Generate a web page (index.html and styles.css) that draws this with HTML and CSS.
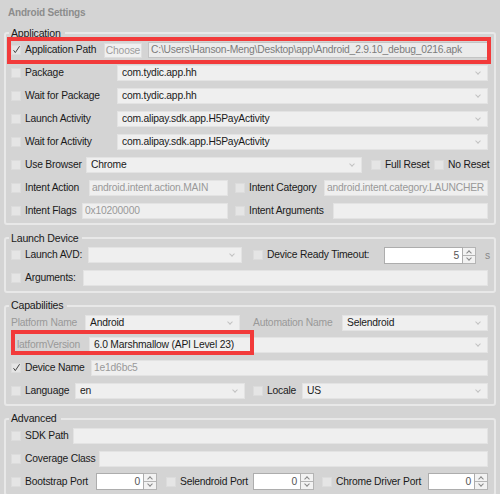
FILE: index.html
```html
<!DOCTYPE html>
<html lang="en">

<head>
    <meta charset="UTF-8">
    <title>Android Settings</title>
    <link rel="stylesheet" href="styles.css">
</head>

<body>
    <div class="page">
        <div class="title">Android Settings</div>

        <!-- Application -->
        <fieldset class="group">
            <legend>Application</legend>
            <div class="row">
                <span class="cb on"><svg viewBox="0 0 10 10"><path d="M2.5 5.2 L4.3 7.6 L8.6 1.2"/></svg></span>
                <span class="lbl w79">Application Path</span>
                <span class="btn">Choose</span>
                <span class="field txt path">C:\Users\Hanson-Meng\Desktop\app\Android_2.9.10_debug_0216.apk</span>
            </div>
            <div class="row">
                <span class="cb"></span>
                <span class="lbl w92">Package</span>
                <span class="field sel">com.tydic.app.hh</span>
            </div>
            <div class="row">
                <span class="cb"></span>
                <span class="lbl w92">Wait for Package</span>
                <span class="field sel">com.tydic.app.hh</span>
            </div>
            <div class="row">
                <span class="cb"></span>
                <span class="lbl w92">Launch Activity</span>
                <span class="field sel">com.alipay.sdk.app.H5PayActivity</span>
            </div>
            <div class="row">
                <span class="cb"></span>
                <span class="lbl w92">Wait for Activity</span>
                <span class="field sel">com.alipay.sdk.app.H5PayActivity</span>
            </div>
            <div class="row">
                <span class="cb"></span>
                <span class="lbl w61">Use Browser</span>
                <span class="field sel fw276">Chrome</span>
                <span class="cb ml9"></span>
                <span class="lbl w49">Full Reset</span>
                <span class="cb"></span>
                <span class="lbl">No Reset</span>
            </div>
            <div class="row">
                <span class="cb"></span>
                <span class="lbl w64">Intent Action</span>
                <span class="field txt dim fw139">android.intent.action.MAIN</span>
                <span class="cb ml7"></span>
                <span class="lbl w75">Intent Category</span>
                <span class="field txt dim">android.intent.category.LAUNCHER</span>
            </div>
            <div class="row">
                <span class="cb"></span>
                <span class="lbl w57">Intent Flags</span>
                <span class="field txt dim fw146">0x10200000</span>
                <span class="cb ml7"></span>
                <span class="lbl w84">Intent Arguments</span>
                <span class="field txt"></span>
            </div>
        </fieldset>

        <!-- Launch Device -->
        <fieldset class="group">
            <legend>Launch Device</legend>
            <div class="row">
                <span class="cb"></span>
                <span class="lbl w63">Launch AVD:</span>
                <span class="field sel fw154"></span>
                <span class="cb ml11"></span>
                <span class="lbl w117">Device Ready Timeout:</span>
                <span class="spin fw92"><span class="val">5</span><span class="arrows"><i class="up"></i><i class="down"></i></span></span>
                <span class="unit">s</span>
            </div>
            <div class="row">
                <span class="cb"></span>
                <span class="lbl w58">Arguments:</span>
                <span class="field txt"></span>
            </div>
        </fieldset>

        <!-- Capabilities -->
        <fieldset class="group">
            <legend>Capabilities</legend>
            <div class="row">
                <span class="lbl dim w74">Platform Name</span>
                <span class="field sel fw155">Android</span>
                <span class="lbl dim ml13 w89">Automation Name</span>
                <span class="field sel">Selendroid</span>
            </div>
            <div class="row">
                <span class="lbl dim w78 cut">latformVersion</span>
                <span class="field sel">6.0 Marshmallow (API Level 23)</span>
            </div>
            <div class="row">
                <span class="cb on"><svg viewBox="0 0 10 10"><path d="M2.5 5.2 L4.3 7.6 L8.6 1.2"/></svg></span>
                <span class="lbl w66">Device Name</span>
                <span class="field txt dim">1e1d6bc5</span>
            </div>
            <div class="row">
                <span class="cb"></span>
                <span class="lbl w50">Language</span>
                <span class="field sel fw170">en</span>
                <span class="cb ml8"></span>
                <span class="lbl w35">Locale</span>
                <span class="field sel">US</span>
            </div>
        </fieldset>

        <!-- Advanced -->
        <fieldset class="group">
            <legend>Advanced</legend>
            <div class="row">
                <span class="cb"></span>
                <span class="lbl w48">SDK Path</span>
                <span class="field txt"></span>
            </div>
            <div class="row">
                <span class="cb"></span>
                <span class="lbl w74">Coverage Class</span>
                <span class="field txt"></span>
            </div>
            <div class="row">
                <span class="cb"></span>
                <span class="lbl w71">Bootstrap Port</span>
                <span class="spin fw61"><span class="val">0</span><span class="arrows"><i class="up"></i><i class="down"></i></span></span>
                <span class="cb ml9"></span>
                <span class="lbl w73">Selendroid Port</span>
                <span class="spin fw61"><span class="val">0</span><span class="arrows"><i class="up"></i><i class="down"></i></span></span>
                <span class="cb ml8"></span>
                <span class="lbl w92">Chrome Driver Port</span>
                <span class="spin grow"><span class="val">0</span><span class="arrows"><i class="up"></i><i class="down"></i></span></span>
            </div>
        </fieldset>

        <!-- 红框标注 -->
        <div class="mark mark-path"></div>
        <div class="mark mark-version"></div>
    </div>
</body>

</html>
```

FILE: styles.css
```css
body {
    margin: 0;
    background: #d4d4d4;
    font-family: "Liberation Sans", Arial, sans-serif;
    font-size: 10.3px;
    letter-spacing: -0.2px;
    color: #1a1a1a;
}
.page {
    position: relative;
    width: 500px;
    height: 494px;
    overflow: hidden;
}
.title {
    padding: 7px 0 0 8px;
    height: 12px;
    line-height: 12px;
    font-size: 10px;
    font-weight: bold;
    color: #8c8c8c;
    margin-bottom: 7.5px;
}
/* 分组框 */
.group {
    margin: 0 4px 6.5px;
    border: 2px solid #e8e8e8;
    border-radius: 3px;
    padding: 2.5px 6px 4.5px 5px;
    min-width: 0;
}
.group legend {
    padding: 0 4px 0 2px;
    margin-left: -2px;
    font-size: 10.6px;
    line-height: 13px;
    color: #1a1a1a;
}
.row {
    display: flex;
    align-items: center;
    height: 16px;
    white-space: nowrap;
}
.row + .row {
    margin-top: 6.95px;
}
.cb {
    flex: none;
    width: 10px;
    height: 10px;
    box-sizing: border-box;
    margin-right: 4px;
    background: #e5e5e5;
    border: 1px solid #dcdcdc;
}
.cb svg {
    display: block;
    width: 10px;
    height: 10px;
    margin: -1px 0 0 -1px;
}
.cb svg path {
    fill: none;
    stroke: #444;
    stroke-width: 1;
}
.lbl {
    flex: none;
    line-height: 16px;
}
.dim {
    color: #999;
}
.cut {
    padding-left: 6px;
    box-sizing: border-box;
}
.btn {
    flex: none;
    width: 38px;
    height: 15px;
    box-sizing: border-box;
    background: #f0f0f0;
    border: 1px solid #dedede;
    color: #9d9d9d;
    text-align: center;
    line-height: 13px;
    margin-right: 6px;
}
.field {
    flex: 1;
    position: relative;
    height: 16px;
    box-sizing: border-box;
    background: #efefef;
    border: 1px solid #e3e3e3;
    line-height: 14px;
    overflow: hidden;
    color: #1a1a1a;
}
.field.txt {
    padding-left: 2px;
}
.field.sel {
    padding-left: 4px;
}
.field.dim {
    color: #999;
}
.field.path {
    color: #7c7c7c;
    border-color: #c4c4c4;
    background: #ebebeb;
}
.field.sel::after {
    content: "";
    position: absolute;
    right: 7px;
    top: 4px;
    width: 3px;
    height: 3px;
    border-right: 1px solid #c2c2c2;
    border-bottom: 1px solid #c2c2c2;
    transform: rotate(45deg);
}
/* 数字输入框 */
.spin {
    flex: none;
    display: flex;
    height: 17px;
}
.spin.grow {
    flex: 1;
}
.spin .val {
    flex: 1;
    background: #fff;
    border: 1px solid #adadad;
    text-align: right;
    padding-right: 3px;
    line-height: 15px;
    color: #555;
}
.spin .arrows {
    width: 13px;
    display: flex;
    flex-direction: column;
}
.spin i {
    flex: 1;
    position: relative;
    background: #f2f2f2;
    border: 1px solid #b4b4b4;
    border-left: none;
}
.spin i.down {
    border-top: none;
}
.spin i::after {
    content: "";
    position: absolute;
    left: 4px;
    width: 3px;
    height: 3px;
    border-right: 1px solid #888;
    border-bottom: 1px solid #888;
}
.spin i.up::after {
    top: 3px;
    transform: rotate(-135deg);
}
.spin i.down::after {
    top: 0px;
    transform: rotate(45deg);
}
.unit {
    flex: none;
    margin-left: 9px;
    color: #888;
}
/* 宽度 */
.w35 { width: 35px; }
.w48 { width: 48px; }
.w49 { width: 49px; }
.w50 { width: 50px; }
.w57 { width: 57px; }
.w58 { width: 58px; }
.w61 { width: 61px; }
.w63 { width: 63px; }
.w64 { width: 64px; }
.w66 { width: 66px; }
.w71 { width: 71px; }
.w73 { width: 73px; }
.w74 { width: 74px; }
.w75 { width: 75px; }
.w78 { width: 78px; }
.w79 { width: 79px; }
.w84 { width: 84px; }
.w89 { width: 89px; }
.w92 { width: 92px; }
.w117 { width: 117px; }
.fw61 { flex: none; width: 61px; }
.fw92 { flex: none; width: 92px; }
.fw139 { flex: none; width: 139px; }
.fw146 { flex: none; width: 146px; }
.fw154 { flex: none; width: 154px; }
.fw155 { flex: none; width: 155px; }
.fw170 { flex: none; width: 170px; }
.fw276 { flex: none; width: 276px; }
.ml7 { margin-left: 7px; }
.ml8 { margin-left: 8px; }
.ml9 { margin-left: 9px; }
.ml11 { margin-left: 11px; }
.ml13 { margin-left: 13px; }
/* 红框 */
.mark {
    position: absolute;
    border: 4px solid #f23a3a;
}
.mark-path {
    left: 7px;
    top: 37px;
    width: 476px;
    height: 19px;
}
.mark-version {
    left: 11px;
    top: 330px;
    width: 235px;
    height: 17px;
}
```
